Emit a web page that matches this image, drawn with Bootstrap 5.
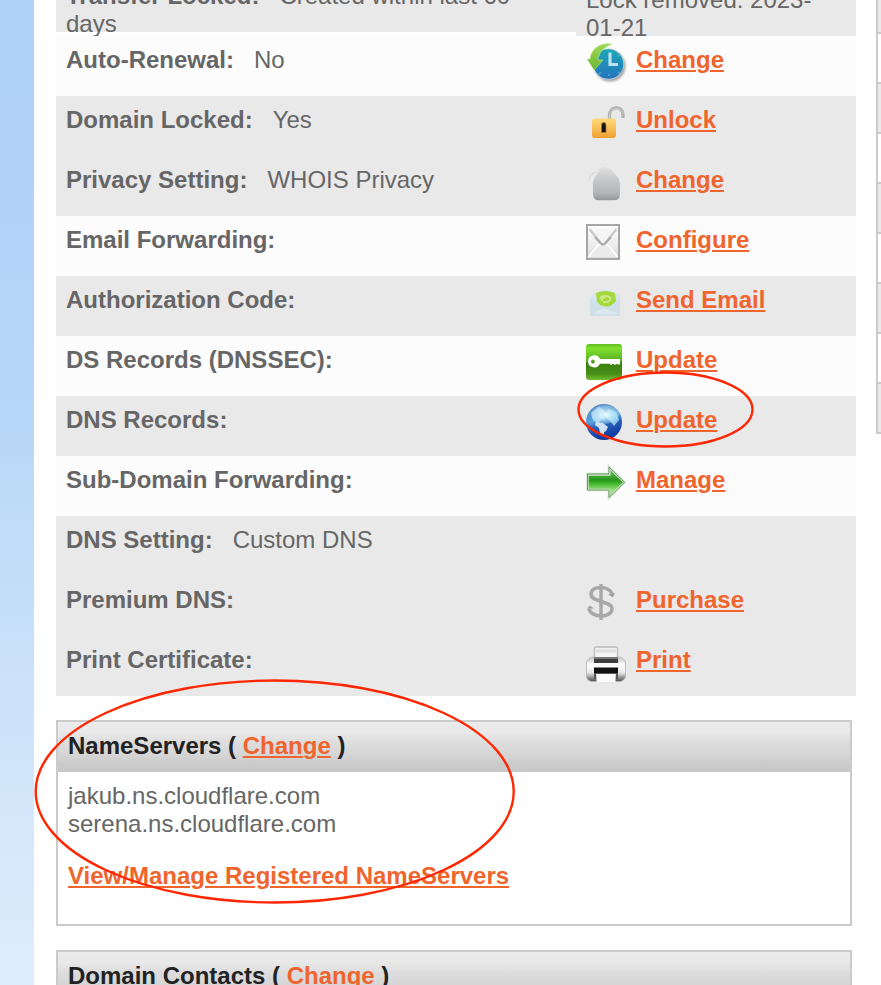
<!DOCTYPE html>
<html lang="en">
<head>
<meta charset="utf-8">
<meta name="viewport" content="width=device-width, initial-scale=1">
<title>Domain details</title>
<link rel="stylesheet" href="https://cdn.jsdelivr.net/npm/bootstrap@5.3.0/dist/css/bootstrap.min.css">
<style>
body{font:24px/28px "Liberation Sans",Arial,sans-serif;color:#666;background:#fff;height:985px}
a,a:hover{color:#f0642d;font-weight:700;text-decoration:underline;text-decoration-thickness:2px;text-underline-offset:2px}
.rail{width:34px;flex:none;background:linear-gradient(#afd2f7 0,#b0d2f7 13%,#b5d6f8 40%,#cce2f9 70%,#deedfc 100%)}
.main-col{width:800px;flex:none;margin-left:22px}
.line{height:60px;flex:none}
.odd-line{background:#fcfcfc}
.even-line{background:#e9e9e9}
.what{width:520px;padding:10px 60px 0 10px}
.what b{margin-right:20px}
.act{width:280px;padding:10px 10px 0 60px;position:relative}
.act svg{position:absolute;left:7px;top:4px;width:46px;height:46px;filter:blur(.45px)}
.first-line{height:36px}
.first-line .what{height:32px;padding-top:0}
.first-line .act{padding:0 30px 0 10px}
.first-line .what span,.first-line .act span{display:block}
.first-line .what span{margin-top:-18px}
.first-line .act span{margin-top:-14px}
.panel{width:796px;border:2px solid #cbcbcb;flex:none}
.panel-top{height:50px;padding:10px 10px 0;color:#222;font-weight:700;background:linear-gradient(#ebebeb 0,#e9e9e9 20%,#dcdcdc 42%,#d7d7d7 62%,#cbcbcb 84%,#c8c8c8 100%)}
.panel-text{height:152px;padding:10px}
.side{width:5px;flex:none;margin-left:20px;border-left:2px solid #cbcbcb;height:434px}
.side div{height:50px;border-bottom:2px solid #cbcbcb;background:#fff}
.side div:nth-child(odd){background:#eaeaea}
.side div:first-child{height:34px}
.notes{left:0;top:0;pointer-events:none}
</style>
<script src="https://cdn.jsdelivr.net/npm/bootstrap@5.3.0/dist/js/bootstrap.bundle.min.js"></script>
</head>
<body class="overflow-hidden position-relative m-0">
<div class="d-flex h-100 overflow-hidden">
  <aside class="rail"></aside>
  <main class="main-col d-flex flex-column">
    <div class="line first-line d-flex overflow-hidden">
      <div class="what even-line"><span><b>Transfer Locked:</b>Created within last 60 days</span></div>
      <div class="act even-line"><span>Lock removed: 2023-01-21</span></div>
    </div>
    <div class="line odd-line d-flex"><div class="what"><b>Auto-Renewal:</b>No</div><div class="act">
      <svg viewBox="0 0 46 46"><defs><linearGradient id="clk" x2="0" y2="1"><stop stop-color="#1ca8b7"/><stop offset="1" stop-color="#2474bd"/></linearGradient><linearGradient id="lime" x2="0" y2="1"><stop stop-color="#9fd957"/><stop offset="1" stop-color="#69b630"/></linearGradient><filter id="soft"><feGaussianBlur stdDeviation="1"/></filter></defs>
      <circle cx="27" cy="26" r="15.500" fill="#888" opacity=".75" filter="url(#soft)"/><circle cx="25.500" cy="24" r="15.500" fill="#c3d3dc"/><circle cx="25.500" cy="24" r="14.800" fill="url(#clk)"/>
      <path d="M27 12.500v12h8" fill="none" stroke="#b9e3ee" stroke-width="3.200"/><path d="M16 15l1 1M37 14l-2 2M16 34l2-2M37 34l-2-2M26 36v-2" stroke="#5fa9cf" stroke-width="1.3"/>
      <path d="M29 4C17 2 8 9 7 19H4l7 11 9-10h-5c0-7 5-12 14-16z" fill="url(#lime)" stroke="#bce78d" stroke-width=".7"/></svg>
      <a href="#">Change</a></div></div>
    <div class="line even-line d-flex"><div class="what"><b>Domain Locked:</b>Yes</div><div class="act">
      <svg viewBox="0 0 46 46"><defs><linearGradient id="gold" x2="0" y2="1"><stop stop-color="#ffda7c"/><stop offset=".55" stop-color="#f8bd56"/><stop offset="1" stop-color="#ed9c2e"/></linearGradient></defs>
      <path d="M26.500 19v-4c0-9 13-10 13.500-.5V18" fill="none" stroke="#b0b0b0" stroke-width="3.200"/><path d="M26.500 18v-3c0-8 12.500-9 13.500-1" fill="none" stroke="#ccc" stroke-width="1"/>
      <rect x="9" y="18.500" width="24" height="19.500" rx="3" fill="url(#gold)"/><path d="M18 25q0-3 2.700-3t2.700 3v8H18z" fill="#a77830"/><path d="M19 25q0-2 1.800-2t1.800 2v7H19z" fill="#15130e"/></svg>
      <a href="#">Unlock</a></div></div>
    <div class="line even-line d-flex"><div class="what"><b>Privacy Setting:</b>WHOIS Privacy</div><div class="act">
      <svg viewBox="0 0 46 46"><defs><linearGradient id="grey" x2="0" y2="1"><stop stop-color="#dedede"/><stop offset=".35" stop-color="#c8c9ca"/><stop offset=".8" stop-color="#b1b3b4"/><stop offset="1" stop-color="#939698"/></linearGradient></defs>
      <path d="M10 26q0-5 4-10 3-7 8-7 6 0 10 7 5 4 5 10v10q0 6-6 6H16q-6 0-6-6z" transform="translate(0 -4) translate(0 2.300)" fill="url(#grey)"/><path d="M6 20q1-7 8-8M15 10q7-4 11 1" fill="none" stroke="#dcdcdc" stroke-width="1.5"/></svg>
      <a href="#">Change</a></div></div>
    <div class="line odd-line d-flex"><div class="what"><b>Email Forwarding:</b></div><div class="act">
      <svg viewBox="0 0 46 46"><defs><linearGradient id="paper" x2="0" y2="1"><stop stop-color="#fff"/><stop offset="1" stop-color="#dedede"/></linearGradient></defs>
      <rect x="4" y="5" width="32" height="34" fill="url(#paper)" stroke="#a6a6a6" stroke-width="2"/><path d="M5.500 37L15 25h10l9.500 12" fill="#ebebeb" stroke="#fff" stroke-width="1.500"/><path d="M6.500 9l11 14q2.500 3 5 0l11-14" fill="#f5f5f5" stroke="#c8c8c8" stroke-width="2.200"/><path d="M12 17l6 6.500q2 2 4 0l6-6.500" fill="none" stroke="#aaa" stroke-width="2"/></svg>
      <a href="#">Configure</a></div></div>
    <div class="line even-line d-flex"><div class="what"><b>Authorization Code:</b></div><div class="act">
      <svg viewBox="0 0 46 46"><defs><linearGradient id="sky" x2="0" y2="1"><stop stop-color="#e2edf2"/><stop offset="1" stop-color="#c4d8e3"/></linearGradient></defs>
      <path d="M7 16L22 6l15 10v18q0 2-2 2H9q-2 0-2-2z" fill="url(#sky)"/><path d="M7 17l3 5 12 5 12-5 3-5v17q0 2-2 2H9q-2 0-2-2z" fill="#cedfe8"/><path d="M8 34l13-6 15 6" fill="#dce8ee"/><path d="M13 13q9-4 19 0l1 8q-5 6-10 5.500-6-.5-9-4.500z" fill="#a5d83b"/><path d="M17 19q1-4 6-3 6 1 4 4-2 3-7 2m-1-1q0-4 4-4" fill="none" stroke="#cce886" stroke-width="1.800"/></svg>
      <a href="#">Send Email</a></div></div>
    <div class="line odd-line d-flex"><div class="what"><b>DS Records (DNSSEC):</b></div><div class="act">
      <svg viewBox="0 0 46 46"><defs><linearGradient id="leaf" x2="0" y2="1"><stop stop-color="#60bc1d"/><stop offset=".12" stop-color="#7fe02f"/><stop offset=".47" stop-color="#58af20"/><stop offset=".53" stop-color="#3d7f0e"/><stop offset=".82" stop-color="#468d19"/><stop offset="1" stop-color="#70bd30"/></linearGradient></defs>
      <rect x="3" y="4" width="36" height="36" rx="3" fill="url(#leaf)"/><path fill-rule="evenodd" d="M5 21.500a6.300 6.300 0 0 1 12-2.500H37v5.500h-2l-1-.8-2 1.300-2-1.200-2 1.200-1.500-1.200H17A6.300 6.300 0 0 1 5 21.500m3 0a1.900 1.900 0 1 0 3.800 0 1.900 1.900 0 1 0-3.800 0" fill="#fff"/></svg>
      <a href="#">Update</a></div></div>
    <div class="line even-line d-flex"><div class="what"><b>DNS Records:</b></div><div class="act">
      <svg viewBox="0 0 46 46"><defs><linearGradient id="sea" x1=".2" x2=".5" y2="1"><stop stop-color="#5783bd"/><stop offset=".45" stop-color="#5aa0dc"/><stop offset=".62" stop-color="#285fb8"/><stop offset="1" stop-color="#0b359c"/></linearGradient><radialGradient id="glow"><stop stop-color="#f3ffff"/><stop offset="1" stop-color="#a9e4f7" stop-opacity=".3"/></radialGradient></defs>
      <circle cx="21" cy="22" r="18" fill="url(#sea)"/><path d="M8 13l8-6 5 3-2 5 3 4-4 1-3 4-5-4z" fill="#d0eafa" opacity=".7"/><path d="M25 9l8 3 3 8-5 6-4-5-4-4z" fill="#b4e6fa" opacity=".75"/><ellipse cx="22" cy="14.500" rx="14" ry="9.500" fill="url(#glow)"/><path d="M13 22l7 1 5 4-2 4-2 1v4l-4-3-1-5-4-3z" fill="#cfe2f5"/></svg>
      <a href="#">Update</a></div></div>
    <div class="line odd-line d-flex"><div class="what"><b>Sub-Domain Forwarding:</b></div><div class="act">
      <svg viewBox="0 0 46 46"><defs><linearGradient id="grass" x2="0" y2="1"><stop stop-color="#8cc97c"/><stop offset=".42" stop-color="#259719"/><stop offset=".55" stop-color="#43b82d"/><stop offset=".8" stop-color="#a8e891"/><stop offset="1" stop-color="#4f9a42"/></linearGradient></defs>
      <path d="M4.500 14H26V7l15.500 15.300L26 37.500V30H4.500z" fill="url(#grass)" stroke="#cfe0cc" stroke-width="2.500"/><path d="M4.500 14H26V7l15.500 15.300L26 37.500V30H4.500z" fill="none" stroke="#689f60" stroke-width="1"/><path d="M6 15.500h21v-5" fill="none" stroke="#b5d9ad" stroke-width="1.200"/></svg>
      <a href="#">Manage</a></div></div>
    <div class="line even-line d-flex"><div class="what"><b>DNS Setting:</b>Custom DNS</div></div>
    <div class="line even-line d-flex"><div class="what"><b>Premium DNS:</b></div><div class="act">
      <svg viewBox="0 0 46 46"><g fill="none" stroke="#a8a8a8"><path d="M18 4v36" stroke-width="3.400"/><path d="M29 14C26 5.500 8.500 5 8 14c0 9 21 6.500 21 14.500 0 10-21 10-23 0" stroke-width="3.600"/></g><path d="M25 14.500l7-1.500-2 4.500zM4 28.500l3-3 4 3z" fill="#a0a0a0"/></svg>
      <a href="#">Purchase</a></div></div>
    <div class="line even-line d-flex"><div class="what"><b>Print Certificate:</b></div><div class="act">
      <svg viewBox="0 0 46 46"><defs><linearGradient id="shell" x2="0" y2="1"><stop stop-color="#c4c4c4"/><stop offset=".35" stop-color="#fff"/><stop offset=".65" stop-color="#e6e6e6"/><stop offset="1" stop-color="#4a4a4a"/></linearGradient></defs>
      <g transform="translate(0 4)"><path d="M3.500 19q1-6 8-6h23q7 0 8 6v14q-1 3-5 4.500H8.500q-4-.5-5-4.500z" fill="url(#shell)" stroke="#b5b5b5" stroke-width=".8"/><path d="M11.500 17V5q0-2 2-2h19q2 0 2 2v12z" fill="#f4f4f4" stroke="#bbb" stroke-width="1.300"/><path d="M13 7h20" stroke="#dedede" stroke-width="3"/><path d="M11 13h24v6H11z" fill="#3d3d3d"/><path d="M11 14h24" stroke="#777" stroke-width="2"/><path d="M4 19h38v4.500H4z" fill="#fafafa"/><path d="M11 23.500h24v6.500H11z" fill="#111"/><path d="M11 29h24v6l-2 0v-5H13v5h-2z" fill="#555"/><path d="M13.500 30h19v8h-19z" fill="#fafafa"/></g></svg>
      <a href="#">Print</a></div></div>
    <section class="panel mt-4">
      <div class="panel-top">NameServers ( <a href="#">Change</a> )</div>
      <div class="panel-text">jakub.ns.cloudflare.com<br>serena.ns.cloudflare.com<div class="mt-4"><a href="#">View/Manage Registered NameServers</a></div></div>
    </section>
    <section class="panel mt-4">
      <div class="panel-top">Domain Contacts ( <a href="#">Change</a> )</div>
    </section>
  </main>
  <aside class="side"><div></div><div></div><div></div><div></div><div></div><div></div><div></div><div></div><div></div></aside>
</div>
<svg class="notes position-absolute" width="881" height="985" fill="none" stroke="#ff2600" stroke-width="2.400"><ellipse cx="665.500" cy="409.500" rx="87" ry="37"/><ellipse cx="274.700" cy="791.500" rx="239" ry="111"/></svg>
</body>
</html>
